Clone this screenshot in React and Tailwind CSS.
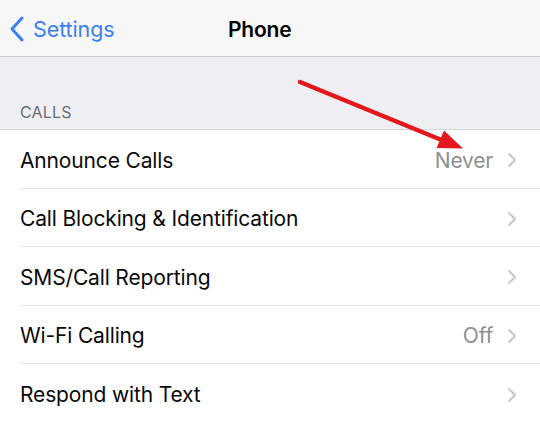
import React from "react";

const rows = [
  { label: "Announce Calls", value: "Never" },
  { label: "Call Blocking & Identification" },
  { label: "SMS/Call Reporting" },
  { label: "Wi-Fi Calling", value: "Off" },
  { label: "Respond with Text", last: true },
];

function Chevron() {
  return (
    <svg width="10" height="16" viewBox="0 0 10 16" className="shrink-0">
      <path d="M2 2 L8 8 L2 14" fill="none" stroke="#c4c4c8" strokeWidth="1.8" strokeLinecap="round" strokeLinejoin="round" />
    </svg>
  );
}

export default function App() {
  return (
    <div
      className="relative w-[540px] h-[422px] overflow-hidden bg-white"
      style={{ fontFamily: "Inter, 'Noto Sans', sans-serif" }}
    >
      <div className="relative h-[57px] bg-[#f7f7f8] border-b border-[#cfcfd3] flex items-center pt-[2px]">
        <div className="flex items-center pl-[10px] gap-[9px] text-[#3b7ff0] text-[21.5px] tracking-[-0.1px]">
          <svg width="14" height="26" viewBox="0 0 14 26">
            <path d="M12 2 L2 13 L12 24" fill="none" stroke="#3b7ff0" strokeWidth="3" strokeLinecap="round" strokeLinejoin="round" />
          </svg>
          <span>Settings</span>
        </div>
        <div className="absolute left-[228px] top-[2px] h-full flex items-center text-[21px] font-semibold text-black tracking-[-0.2px]">
          Phone
        </div>
      </div>
      <div className="h-[73px] bg-[#efeff3] border-b border-[#d6d6da] flex items-end pl-[20px] pb-[5px]">
        <span className="text-[16px] text-[#6d6d72] tracking-[0.2px]">CALLS</span>
      </div>
      <div className="pl-[20px]">
        {rows.map((r) => (
          <div
            key={r.label}
            className={`h-[58.5px] flex items-center pr-[23px] pt-[3px] ${r.last ? "" : "border-b border-[#e2e2e5]"}`}
          >
            <span className="flex-1 text-[21px] text-[#0a0a0a] tracking-[-0.15px]">{r.label}</span>
            {r.value && (
              <span className="text-[21px] text-[#8e8e93] mr-[14px] tracking-[-0.2px]">{r.value}</span>
            )}
            <Chevron />
          </div>
        ))}
      </div>
      <svg className="absolute left-0 top-0 pointer-events-none" width="540" height="422">
        <line x1="300" y1="82" x2="444" y2="141" stroke="#e3181c" strokeWidth="4.5" strokeLinecap="round" />
        <polygon points="463,148.5 436.6,148 444,130.5" fill="#e3181c" />
      </svg>
    </div>
  );
}
